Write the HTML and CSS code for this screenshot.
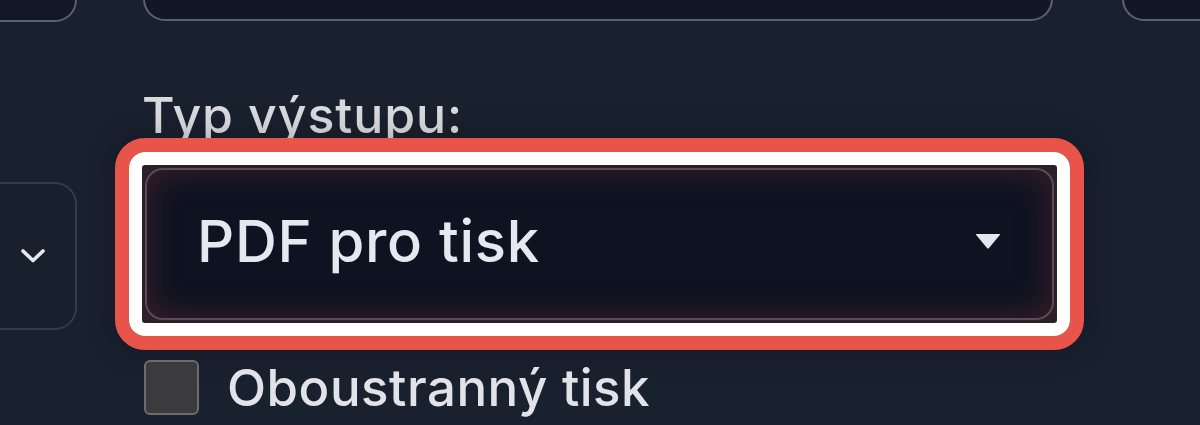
FILE: index.html
```html
<!DOCTYPE html>
<html lang="cs">
<head>
<meta charset="utf-8">
<title>Typ výstupu</title>
<link rel="stylesheet" href="styles.css">
</head>
<body>
<div class="page">
  <div class="col-left">
    <div class="stub stub-top"></div>
    <div class="stub stub-mid">
      <svg class="chevron" viewBox="0 0 26 16" width="26" height="16"><path d="M3 3 L13 12.5 L23 3" fill="none" stroke="#e6e8ee" stroke-width="3.6" stroke-linecap="round" stroke-linejoin="round"/></svg>
    </div>
  </div>
  <div class="col-main">
    <div class="top-box"></div>
    <div class="field-label">Typ výstupu:</div>
    <div class="focus-red">
      <div class="focus-white">
        <div class="select-ring">
          <div class="select-inner">
            <span class="select-value">PDF pro tisk</span>
            <svg class="caret" viewBox="0 0 26 16" width="26" height="16"><path d="M1.5 1 L24.5 1 Q25.5 1 24.8 2 L14 15 Q13 16 12 15 L1.2 2 Q0.5 1 1.5 1 Z" fill="#e4e6ee"/></svg>
          </div>
        </div>
      </div>
    </div>
    <div class="check">
      <span class="check-box"></span>
      <span class="check-label">Oboustranný tisk</span>
    </div>
  </div>
  <div class="col-right">
    <div class="stub-right"></div>
  </div>
</div>
</body>
</html>
```

FILE: styles.css
```css
html, body {
  margin: 0;
  padding: 0;
  background: #19202e;
  height: 425px;
  overflow: hidden;
  font-family: "Inter", "Noto Sans", sans-serif;
}

.page {
  display: grid;
  grid-template-columns: 77px 915px 1fr;
  column-gap: 65px;
  align-items: start;
}

.col-left {
  display: flex;
  flex-direction: column;
}

.stub {
  margin-left: -30px;
  box-sizing: border-box;
  border-radius: 0 22px 22px 0;
}

.stub-top {
  margin-top: -40px;
  height: 62px;
  background: #121827;
  border: 2px solid #5a616f;
  border-left: none;
}

.stub-mid {
  margin-top: 160px;
  height: 148px;
  background: #18202e;
  border: 2px solid #353d4b;
  border-left: none;
  display: flex;
  align-items: center;
  justify-content: flex-end;
  padding-right: 29px;
}

.chevron {
  display: block;
}

.col-main {
  display: flex;
  flex-direction: column;
}

.top-box {
  margin: -40px 4px 0 1px;
  height: 61px;
  box-sizing: border-box;
  background: #111726;
  border: 2px solid #5a616f;
  border-top: none;
  border-radius: 0 0 22px 22px;
}

.field-label {
  margin-top: 64px;
  height: 60px;
  font-size: 50px;
  font-weight: 500;
  line-height: 60px;
  color: #d9dade;
  letter-spacing: 0.9px;
}

.focus-red {
  margin: -7px -27px 0 -27px;
  border: 14px solid #e9544a;
  border-radius: 30px;
  box-shadow: 0 0 30px rgba(0, 0, 0, 0.25);
}

.focus-white {
  border: 13px solid #ffffff;
  border-radius: 16px;
  background: #ffffff;
}

.select-ring {
  height: 158px;
  box-sizing: border-box;
  padding: 3px;
  background: #2b2027;
  border-radius: 3px;
}

.select-inner {
  height: 100%;
  box-sizing: border-box;
  border: 2px solid #5c4a54;
  border-radius: 18px;
  background: #0e1321;
  box-shadow: inset 0 0 34px rgba(140, 45, 55, 0.4);
  display: flex;
  align-items: center;
  justify-content: space-between;
  padding: 0 51px 6px 50px;
}

.select-value {
  font-size: 58px;
  font-weight: 500;
  color: #e6e8ef;
  letter-spacing: 0.7px;
}

.caret {
  display: block;
}

.check {
  margin-top: 7px;
  display: flex;
  align-items: center;
  gap: 28px;
  padding-left: 2px;
}

.check-box {
  width: 55px;
  height: 55px;
  box-sizing: border-box;
  background: #3b3b3d;
  border: 2px solid #6c6c70;
  border-radius: 6px;
  flex: none;
}

.check-label {
  font-size: 51px;
  font-weight: 500;
  color: #e2e3e8;
  letter-spacing: 0.5px;
}

.col-right {
  display: flex;
  flex-direction: column;
}

.stub-right {
  margin-top: -40px;
  margin-right: -40px;
  height: 61px;
  box-sizing: border-box;
  background: #111726;
  border: 2px solid #5a616f;
  border-top: none;
  border-right: none;
  border-radius: 0 0 0 22px;
}
```
